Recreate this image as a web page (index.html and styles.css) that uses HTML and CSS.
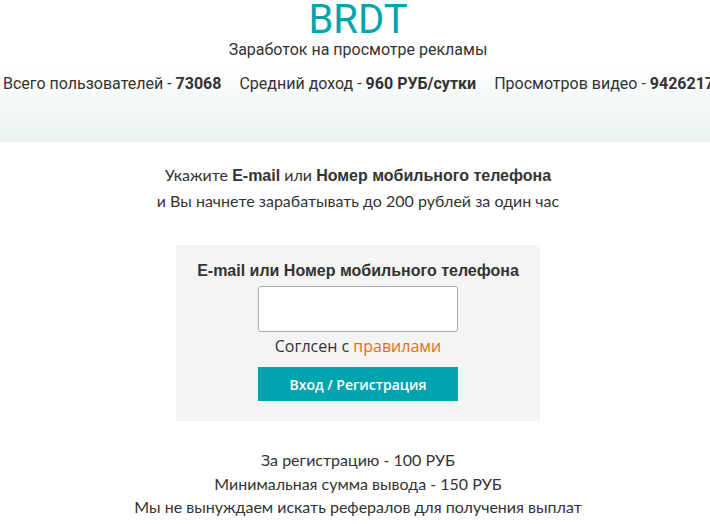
FILE: index.html
```html
<!DOCTYPE html>
<html lang="ru">
<head>
    <meta charset="UTF-8">
    <meta name="viewport" content="width=device-width, initial-scale=1.0">
    <title>BRDT - Заработок на просмотре рекламы</title>
    <link rel="stylesheet" href="styles.css">
</head>
<body>
    <div class="page">
        <div class="header">
            <h1 class="logo">BRDT</h1>
            <div class="slogan">Заработок на просмотре рекламы</div>
            <div class="stats">
                <span>Всего пользователей - <b>73068</b></span>
                <span>Средний доход - <b>960 РУБ/сутки</b></span>
                <span>Просмотров видео - <b>94262173</b></span>
            </div>
        </div>

        <div class="intro">
            Укажите <b>E-mail</b> или <b>Номер мобильного телефона</b><br>
            и Вы начнете зарабатывать до 200 рублей за один час
        </div>

        <form action="" class="login-box" id="login-form">
            <label for="login" class="login-label">E-mail или Номер мобильного телефона</label>
            <input type="text" name="login" id="login" class="login-input">
            <div class="agree">Соглсен с <a href="#">правилами</a></div>
            <button type="submit" class="login-button">Вход / Регистрация</button>
        </form>

        <div class="info">
            За регистрацию - 100 РУБ<br>
            Минимальная сумма вывода - 150 РУБ<br>
            Мы не вынуждаем искать рефералов для получения выплат
        </div>
    </div>
</body>
</html>
```

FILE: styles.css
```css
html, body {
    margin: 0;
    padding: 0;
    overflow-x: hidden;
}
body {
    background: #fff;
    color: #333;
    font-family: Lato, "Noto Sans", sans-serif;
}
.page {
    width: 716px;
    text-align: center;
}

.header {
    height: 142px;
    background: linear-gradient(to bottom, #fff 0%, #fff 45%, #e9f1f1 100%);
    font-family: Roboto, "Liberation Sans", sans-serif;
}
.logo {
    margin: 0;
    font-size: 40px;
    line-height: 40px;
    font-weight: 400;
    color: #00a4ae;
}
.slogan {
    font-size: 16px;
    line-height: 20px;
}
.stats {
    margin-top: 14px;
    padding-left: 3px;
    display: flex;
    gap: 18px;
    white-space: nowrap;
    font-size: 16px;
    line-height: 20px;
}
.stats b {
    font-weight: 700;
}

.intro {
    padding-top: 20px;
    font-size: 16px;
    line-height: 25px;
}
.intro b {
    font-family: "Liberation Sans", Arial, sans-serif;
}

.login-box {
    width: 364px;
    margin: 32px auto 0;
    padding: 16px 0 20px;
    background: #f4f4f4;
    display: flex;
    flex-direction: column;
    align-items: center;
}
.login-label {
    font-family: "Liberation Sans", Arial, sans-serif;
    font-weight: 700;
    font-size: 16px;
    line-height: 20px;
}
.login-input {
    box-sizing: border-box;
    width: 200px;
    height: 46px;
    margin-top: 5px;
    border: 1px solid #aaa;
    border-radius: 3px;
    background: #fff;
}
.agree {
    margin-top: 3px;
    font-family: "Open Sans", sans-serif;
    font-size: 16px;
    line-height: 22px;
}
.agree a {
    color: #e36f14;
    text-decoration: none;
}
.login-button {
    width: 200px;
    height: 34px;
    margin-top: 10px;
    border: none;
    background: #00a4ae;
    color: #fff;
    font-family: "Open Sans", sans-serif;
    font-weight: 600;
    font-size: 14px;
}

.info {
    padding-top: 27px;
    font-size: 16px;
    line-height: 23.5px;
}
```
